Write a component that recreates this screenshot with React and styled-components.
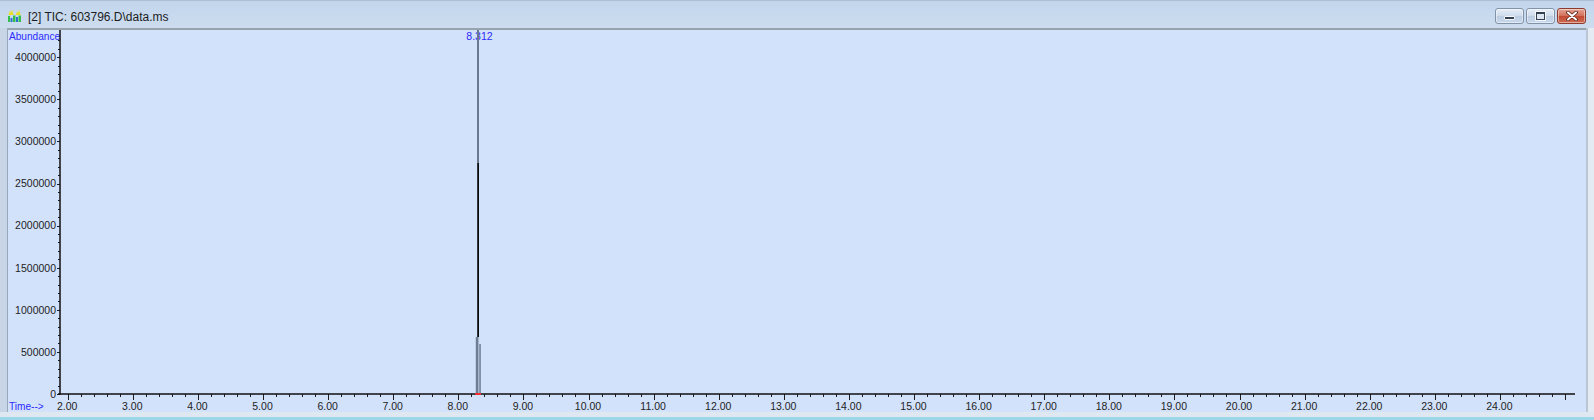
import styled, { createGlobalStyle } from 'styled-components'

const GlobalStyle = createGlobalStyle`
    html, body {
        margin: 0;
        padding: 0;
        background: #c9d8ea;
        overflow: hidden;
    }
    body {
        font-family: "Liberation Sans", Arial, sans-serif;
    }
`

const Window = styled.div`
    width: 1594px;
    height: 420px;
    display: flex;
    flex-direction: column;
    background: #c8d7e9;
`

const TitleBar = styled.div`
    height: 28px;
    flex: none;
    display: flex;
    align-items: flex-start;
    padding: 0 8px;
    box-sizing: border-box;
    background: linear-gradient(to bottom, #c2d5ec 0%, #c9daee 60%, #cddcee 100%);
    border-top: 1px solid #aebfd3;
`

const TitleIcon = styled.svg`
    margin-top: 8px;
    flex: none;
`

const TitleText = styled.div`
    margin: 9px 0 0 6px;
    font-size: 12px;
    line-height: 14px;
    color: #1c1c1c;
    white-space: nowrap;
    flex: 1;
`

const Buttons = styled.div`
    display: flex;
    gap: 2px;
    margin-top: 7px;
`

const CaptionButton = styled.div`
    width: 29px;
    height: 16px;
    box-sizing: border-box;
    border-radius: 3px;
    display: flex;
    align-items: center;
    justify-content: center;
    border: 1px solid ${p => (p.$close ? '#8d3b2e' : '#8293a9')};
    box-shadow: inset 0 0 0 1px rgba(255, 255, 255, 0.45);
    background: ${p => (p.$close
        ? 'linear-gradient(to bottom, #e4a493 0%, #d3705a 48%, #c24a33 52%, #cf6a50 100%)'
        : 'linear-gradient(to bottom, #e6eef7 0%, #cfdcec 48%, #bccde2 52%, #c9d9ec 100%)')};
`

const MinGlyph = styled.span`
    width: 9px;
    height: 2px;
    margin-top: 4px;
    background: #34404f;
    border: 1px solid #f4f7fb;
    border-radius: 1px;
`

const MaxGlyph = styled.span`
    width: 7px;
    height: 5px;
    border: 1px solid #34404f;
    border-top-width: 2px;
    outline: 1px solid #f4f7fb;
    background: #dde6f1;
`

const Middle = styled.div`
    flex: none;
    height: 384px;
    display: flex;
`

const SideFrame = styled.div`
    flex: none;
    width: ${p => (p.$right ? '8px' : '7px')};
    background: ${p => (p.$right
        ? 'linear-gradient(to right, #b9c6d4 0px, #b9c6d4 2px, #e4ebf3 2px)'
        : '#c7d5e6')};
`

const ChartArea = styled.div`
    flex: 1;
    background: #d3e2fb;
    border-top: 2px solid #99a3ae;
    border-left: 1px solid #98a9bd;
    display: flex;
`

const BottomFrame = styled.div`
    flex: none;
    height: 8px;
    background: linear-gradient(to bottom, #dfe7f0 0px, #dfe7f0 5px, #9ad7e8 5px);
`

// chart geometry, in page pixels
const X0 = 67.7
const XS = 65.1
const BASE = 394
const YS = (BASE - 57.3) / 4000000

const xOf = t => X0 + (t - 2) * XS
const yOf = v => BASE - v * YS
const crisp = n => Math.round(n) + 0.5

const BLUE = '#2b2bff'
const INK = '#1e1e1e'

function AppIcon() {
    return (
        <TitleIcon width="14" height="14" viewBox="0 0 14 14">
            <path d="M0.5 6 L2 1.5 L3 4 L4 0.5 L5.5 6 Z" fill="#e8e01e" />
            <path d="M7.5 6 L9 2.5 L10 4.5 L11 0.5 L12.5 6 Z" fill="#e8e01e" />
            <rect x="0" y="7" width="2" height="6" fill="#35c04a" />
            <rect x="2.5" y="9" width="2" height="4" fill="#2f6fd0" />
            <rect x="5" y="6.5" width="2.5" height="6.5" fill="#35c04a" />
            <rect x="8" y="8" width="2" height="5" fill="#2f6fd0" />
            <rect x="10.5" y="6.5" width="2.5" height="6.5" fill="#35c04a" />
        </TitleIcon>
    )
}

function CloseGlyph() {
    return (
        <svg width="12" height="10" viewBox="0 0 12 10">
            <path d="M2 1.5 L10 8.5 M10 1.5 L2 8.5" stroke="#5a2118" strokeWidth="3.6" strokeLinecap="round" />
            <path d="M2 1.5 L10 8.5 M10 1.5 L2 8.5" stroke="#ffffff" strokeWidth="2" strokeLinecap="round" />
        </svg>
    )
}

function Chromatogram() {
    const xTicks = []
    for (let i = 0; i <= 115; i++) {
        const t = 2 + i * 0.2
        const x = crisp(xOf(t))
        xTicks.push(<line key={'xt' + i} x1={x} x2={x} y1={BASE} y2={BASE + (i % 5 === 0 ? 6 : 3)} stroke={INK} strokeWidth="1" />)
    }

    const xLabels = []
    for (let t = 2; t <= 24; t++) {
        xLabels.push(
            <text key={'xl' + t} x={xOf(t) - 0.5} y={410} textAnchor="middle" fill={INK}>{t.toFixed(2)}</text>
        )
    }

    const yTicks = []
    for (let k = 0; k <= 42; k++) {
        const y = crisp(yOf(k * 100000))
        yTicks.push(<line key={'yt' + k} x1={k % 5 === 0 ? 57 : 58} x2={60} y1={y} y2={y} stroke={INK} strokeWidth="1" />)
    }

    const yLabels = []
    for (let k = 0; k <= 8; k++) {
        const v = k * 500000
        yLabels.push(
            <text key={'yl' + k} x={56} y={yOf(v) + 3.8} textAnchor="end" fill={INK}>{v}</text>
        )
    }

    return (
        <svg width="1577" height="382" viewBox="8 30 1577 382" fontFamily="'Liberation Sans', Arial, sans-serif" fontSize="10.5">
            <text x={9} y={39.5} fill={BLUE} fontSize="10.1">Abundance</text>
            <text x={9} y={410} fill={BLUE} fontSize="10.1">Time--&gt;</text>
            <text x={479.5} y={40} fill={BLUE} textAnchor="middle">8.312</text>

            {yLabels}
            {xLabels}
            {yTicks}
            {xTicks}

            {/* axes */}
            <line x1={60} x2={60} y1={30} y2={BASE + 0.7} stroke="#111" strokeWidth="1.5" />
            <line x1={58} x2={1575} y1={BASE} y2={BASE} stroke="#111" strokeWidth="1.5" />

            {/* peak at 8.312 */}
            <rect x={477} y={30} width={2} height={BASE - 30} fill="#6a7890" />
            <rect x={477.4} y={163} width={1.6} height={174} fill="#0c0c0c" />
            <rect x={475.8} y={337} width={2.5} height={BASE - 337} fill="#6f7d93" />
            <rect x={478.3} y={337} width={1} height={BASE - 337} fill="#c2d0e6" />
            <rect x={479.3} y={344} width={1.5} height={BASE - 344} fill="#6f7d93" />
            <rect x={475.4} y={BASE - 1} width={5.4} height={2} fill="#ff2a2a" />
        </svg>
    )
}

function App() {
    return (
        <Window>
            <GlobalStyle />
            <TitleBar>
                <AppIcon />
                <TitleText>[2] TIC: 603796.D\data.ms</TitleText>
                <Buttons>
                    <CaptionButton><MinGlyph /></CaptionButton>
                    <CaptionButton><MaxGlyph /></CaptionButton>
                    <CaptionButton $close><CloseGlyph /></CaptionButton>
                </Buttons>
            </TitleBar>

            <Middle>
                <SideFrame />
                <ChartArea>
                    <Chromatogram />
                </ChartArea>
                <SideFrame $right />
            </Middle>

            <BottomFrame />
        </Window>
    )
}

export default App
